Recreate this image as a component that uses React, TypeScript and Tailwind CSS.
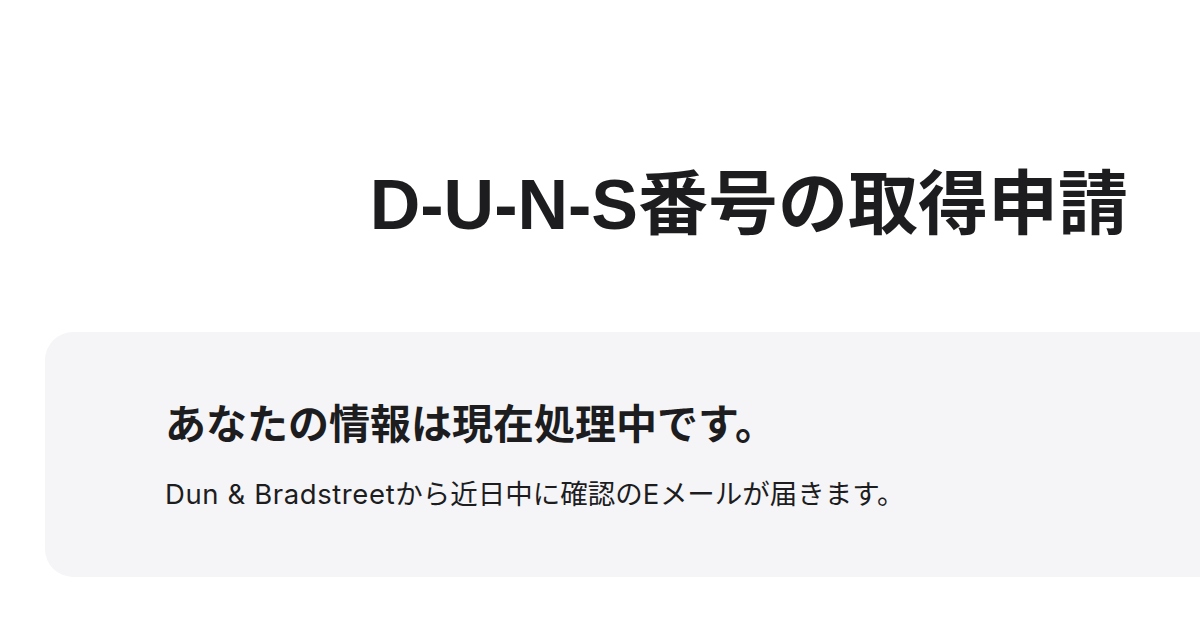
import React from 'react';

const font = { fontFamily: '"Liberation Sans", "Noto Sans CJK JP", sans-serif' };
const bodyFont = { fontFamily: 'Inter, "Noto Sans CJK JP", sans-serif' };

const App: React.FC = () => {
  return (
    <div className="min-h-screen w-[1200px] h-[636px] overflow-hidden bg-white text-[#1d1d1f]" style={font}>
      {/* Page title */}
      <header className="flex justify-end pt-[163px] pr-[72px]">
        <h1 className="text-[70px] font-bold leading-[84px] tracking-normal">D-U-N-S番号の取得申請</h1>
      </header>

      {/* Status card */}
      <section className="ml-[45px] mt-[85px] -mr-[40px] h-[245px] rounded-[28px] bg-[#f5f5f7] pl-[120px] pt-[65px]">
        <h2 className="text-[41px] font-bold leading-[56px]">あなたの情報は現在処理中です。</h2>
        <p className="mt-[21px] text-[27.5px] leading-[40px]" style={bodyFont}>
          <span className="tracking-[0.6px]">Dun &amp; Bradstreet</span>から近日中に確認の<span className="tracking-[0.6px]">E</span>メールが届きます。
        </p>
      </section>
    </div>
  );
};

export default App;
